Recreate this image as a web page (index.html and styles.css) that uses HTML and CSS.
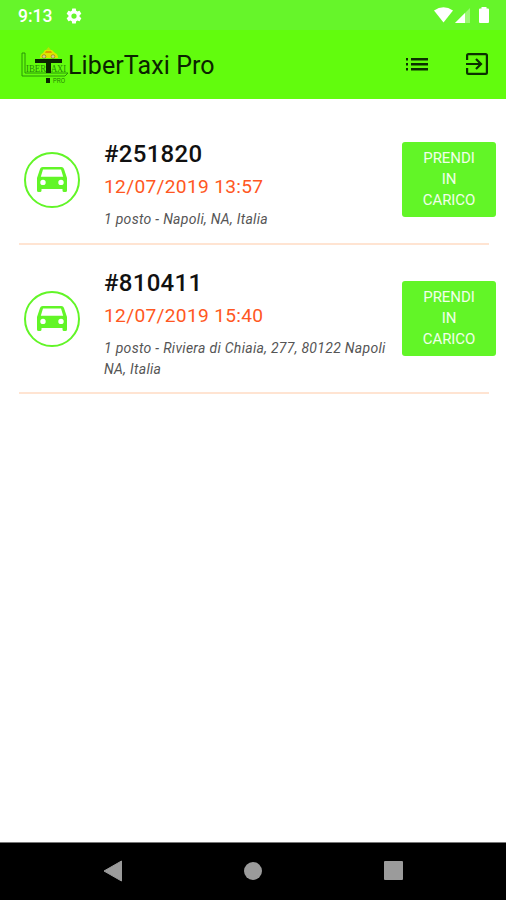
FILE: index.html
```html
<!DOCTYPE html>
<html lang="it">
<head>
<meta charset="utf-8">
<title>LiberTaxi Pro</title>
<link rel="stylesheet" href="styles.css">
</head>
<body>
<div class="status">
  <span class="clock">9:13</span>
  <svg class="gear" width="18" height="18" viewBox="0 0 24 24" fill="#fff"><path d="M19.4 13a7.500 7.500 0 0 0 0-2l2.100-1.650a.5.5 0 0 0 .12-.64l-2-3.460a.5.5 0 0 0-.61-.22l-2.490 1a7.300 7.300 0 0 0-1.690-.98l-.38-2.650A.49.49 0 0 0 14 2h-4a.49.49 0 0 0-.49.42l-.38 2.650c-.61.25-1.170.59-1.690.98l-2.490-1a.5.5 0 0 0-.61.22l-2 3.460a.5.5 0 0 0 .12.64L4.570 11a7.900 7.900 0 0 0 0 2l-2.110 1.650a.5.5 0 0 0-.12.64l2 3.460c.12.22.39.3.61.22l2.490-1c.52.4 1.080.73 1.690.98l.38 2.650c.03.24.24.42.49.42h4c.25 0 .46-.18.49-.42l.38-2.650c.61-.25 1.170-.59 1.690-.98l2.490 1c.23.09.49 0 .61-.22l2-3.460a.5.5 0 0 0-.12-.64zM12 15.500a3.500 3.500 0 1 1 0-7 3.500 3.500 0 0 1 0 7z"/></svg>
  <svg class="signals" width="58" height="18" viewBox="0 0 58 18" fill="#fff"><path d="M0 3.500Q9.500-3 19 3.500L9.500 15.500z"/><path opacity=".35" d="M36 1v15H21z"/><path d="M31 6V16H21z"/><path d="M47.500 1.500V0h5v1.500H54q1 0 1 1V15q0 1-1 1h-8q-1 0-1-1V2.500q0-1 1-1z"/></svg>
</div>
<header class="appbar">
  <svg class="logo" width="47" height="38" viewBox="0 0 47 38">
    <path d="M1 6h3v20h43l-3 3H1z" fill="none" stroke="#258b08" stroke-width=".9"/>
    <path d="M19 11q0-4 3-5l2-3h7l3 3q3 1 3 5z" fill="#dce600"/>
    <path d="M25 3l2.500-3L30 3z" fill="#b4e600"/>
    <path d="M24 6l1-2h5l1 2z" fill="#df9b00"/>
    <circle cx="23" cy="9.500" r="1.800" fill="#d5cc9a" stroke="#8b7600" stroke-width=".6"/><circle cx="32" cy="9.500" r="1.800" fill="#d5cc9a" stroke="#8b7600" stroke-width=".6"/>
    <path d="M14 12h27v4H14zM25 16h5v10h-5zM25 31h4v5h-4z" fill="#0a2500"/>
    <text class="logo-word" x="5" y="25" textLength="20" lengthAdjust="spacingAndGlyphs">IBER</text>
    <text class="logo-word" x="30" y="25" textLength="15" lengthAdjust="spacingAndGlyphs">AXI</text>
    <text class="logo-pro" x="32" y="36" textLength="12" lengthAdjust="spacingAndGlyphs">PRO</text>
  </svg>
  <h1 class="title">LiberTaxi Pro</h1>
  <svg class="list-icon" width="24" height="24" viewBox="0 0 24 24" fill="#0b3000"><path d="M1 6h2v2.400H1zm0 5h2v2.400H1zm0 5h2v2.400H1zM6 6h17v2.400H6zm0 5h17v2.400H6zm0 5h17v2.400H6z"/></svg>
  <svg class="exit-icon" width="24" height="24" viewBox="0 0 24 24" fill="none" stroke="#0b3000" stroke-width="2.200"><path d="M2.100 8V3.500q0-1.400 1.400-1.400h17q1.400 0 1.400 1.400v17q0 1.400-1.400 1.400h-17q-1.400 0-1.400-1.400V16M1 12h14M11 7l5 5-5 5"/></svg>
</header>
<main class="rides">
  <article class="ride">
    <div class="badge"><svg width="30" height="25" viewBox="0 0 30 25"><path fill="#62f527" fill-rule="evenodd" d="M3 2Q3.600 0 5.700 0h18.600Q26.400 0 27 2l3 9v12.500q0 1.500-1.500 1.500H27q-1.500 0-1.500-1.500V22h-21v1.500Q4.500 25 3 25H1.500Q0 25 0 23.500V11zM6 2.500L3.800 9.800h22.400L24 2.500zM6 12.700a2.700 2.700 0 1 0 0 5.400 2.700 2.700 0 0 0 0-5.400zm18 0a2.700 2.700 0 1 0 0 5.400 2.700 2.700 0 0 0 0-5.400z"/></svg></div>
    <div class="info"><h2 class="code">#251820</h2><p class="when">12/07/2019 13:57</p><p class="where">1 posto - Napoli, NA, Italia</p></div>
    <button class="take">PRENDI<br>IN<br>CARICO</button>
  </article>
  <article class="ride">
    <div class="badge"><svg width="30" height="25" viewBox="0 0 30 25"><path fill="#62f527" fill-rule="evenodd" d="M3 2Q3.600 0 5.700 0h18.600Q26.400 0 27 2l3 9v12.500q0 1.500-1.500 1.500H27q-1.500 0-1.500-1.500V22h-21v1.500Q4.500 25 3 25H1.500Q0 25 0 23.500V11zM6 2.500L3.800 9.800h22.400L24 2.500zM6 12.700a2.700 2.700 0 1 0 0 5.400 2.700 2.700 0 0 0 0-5.400zm18 0a2.700 2.700 0 1 0 0 5.400 2.700 2.700 0 0 0 0-5.400z"/></svg></div>
    <div class="info"><h2 class="code">#810411</h2><p class="when">12/07/2019 15:40</p><p class="where">1 posto - Riviera di Chiaia, 277, 80122 Napoli<br>NA, Italia</p></div>
    <button class="take">PRENDI<br>IN<br>CARICO</button>
  </article>
</main>
<nav class="navbar">
  <svg width="20" height="22" viewBox="0 0 20 22"><path d="M18.500 1v20L1 11z" fill="#9b9b9b" stroke="#9b9b9b" stroke-linejoin="round"/></svg>
  <span class="home"></span>
  <span class="recent"></span>
</nav>
</body>
</html>
```

FILE: styles.css
```css
* { box-sizing: border-box; }
body {
  margin: 0;
  height: 900px;
  display: flex;
  flex-direction: column;
  background: #fff;
  font-family: Roboto, sans-serif;
  overflow: hidden;
}
h1, h2, p { margin: 0; }
svg { display: block; flex: none; }
.status {
  height: 30px;
  display: flex;
  align-items: center;
  padding: 1px 14px 0 18px;
  background: #66f52a;
  color: #fff;
}
.clock { width: 34px; font-size: 17.500px; font-weight: 500; line-height: 20px; }
.gear { margin-left: 13px; }
.signals { margin-left: auto; }
.appbar {
  height: 69px;
  display: flex;
  align-items: center;
  padding: 0 17px 0 21px;
  background: #62fc0d;
  color: #0b2400;
}
.logo { margin-top: 3px; }
.logo-word { font: 10px "Liberation Serif", serif; fill: #258b08; }
.logo-pro { font: 6.500px "Liberation Sans", sans-serif; fill: #207d05; }
.title {
  font-size: 25px;
  font-weight: 400;
  line-height: 30px;
  letter-spacing: .1px;
  white-space: nowrap;
  margin-top: 3px;
}
.list-icon { margin-left: auto; margin-bottom: 1px; }
.exit-icon { margin-left: 36px; margin-bottom: 1px; }
.rides { flex: 1; padding: 16px 10px 0 19px; }
.ride {
  display: grid;
  grid-template-columns: 85px 1fr 94px;
  align-items: center;
  height: 129px;
  position: relative;
}
.ride + .ride { height: 149px; }
.ride::after {
  content: "";
  position: absolute;
  left: 0;
  right: 7px;
  bottom: -1px;
  height: 2px;
  background: #ffe4d2;
}
.badge {
  width: 56px;
  height: 56px;
  margin-left: 4.500px;
  border: 2px solid #62f527;
  border-radius: 50%;
  display: grid;
  place-items: center;
}
.info { align-self: start; padding-top: 23px; white-space: nowrap; }
.code { font-size: 24px; font-weight: 500; line-height: 32px; letter-spacing: .3px; color: #111; }
.when { font-size: 19.200px; line-height: 24px; margin-top: 5px; letter-spacing: .3px; color: #ff5722; }
.where { font-size: 14px; font-style: italic; line-height: 21px; margin-top: 10px; letter-spacing: .3px; color: #555; }
.take {
  width: 94px;
  height: 75px;
  padding: 0 0 1px;
  border: 0;
  border-radius: 3px;
  background: #62f527;
  color: #f0ffe9;
  font: 400 15px/21px Roboto, sans-serif;
  letter-spacing: -.1px;
}
.navbar {
  height: 58px;
  display: grid;
  grid-template-columns: repeat(3, 140px);
  justify-content: center;
  align-items: center;
  justify-items: center;
  padding-bottom: 2px;
  background: #000;
  border-top: 1px solid #777;
}
.home { width: 18px; height: 18px; border-radius: 50%; background: #9b9b9b; }
.recent { width: 19px; height: 19px; border-radius: 1px; background: #9b9b9b; }
```
